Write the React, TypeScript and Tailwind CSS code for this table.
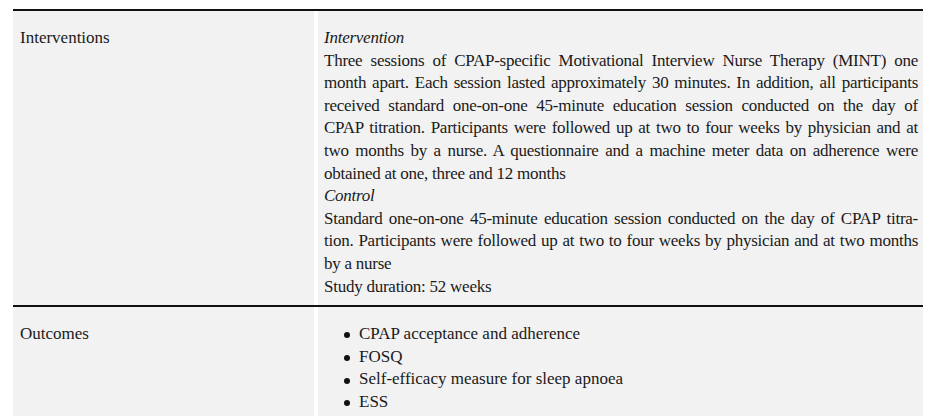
export default function App() {
  const intervention = [
    "Three sessions of CPAP-specific Motivational Interview Nurse Therapy (MINT) one",
    "month apart. Each session lasted approximately 30 minutes. In addition, all participants",
    "received standard one-on-one 45-minute education session conducted on the day of",
    "CPAP titration. Participants were followed up at two to four weeks by physician and at",
    "two months by a nurse. A questionnaire and a machine meter data on adherence were",
  ];
  const control = [
    "Standard one-on-one 45-minute education session conducted on the day of CPAP titra-",
    "tion. Participants were followed up at two to four weeks by physician and at two months",
  ];
  const outcomes = [
    "CPAP acceptance and adherence",
    "FOSQ",
    "Self-efficacy measure for sleep apnoea",
    "ESS",
  ];

  return (
    <div className="min-h-screen bg-white pl-[13px] pr-[22px] pt-[9px] font-['Liberation_Serif','Times_New_Roman',serif] text-[#1a1a1a] text-[17px] leading-[22.6px]">
      <div className="flex gap-1 border-t-2 border-[#111]">
        <div className="w-[301px] shrink-0 bg-[#f2f2f2] pl-[7px] pt-[16px]">Interventions</div>
        <div className="min-w-0 flex-1 bg-[#f2f2f2] pl-[6px] pr-[5px] pt-[16px] pb-[7px] tracking-[-0.25px]">
          <div className="italic">Intervention</div>
          {intervention.map((l) => (
            <div key={l} className="whitespace-nowrap text-justify [text-align-last:justify]">
              {l}
            </div>
          ))}
          <div>obtained at one, three and 12 months</div>
          <div className="italic">Control</div>
          {control.map((l) => (
            <div key={l} className="whitespace-nowrap text-justify [text-align-last:justify]">
              {l}
            </div>
          ))}
          <div>by a nurse</div>
          <div>Study duration: 52 weeks</div>
        </div>
      </div>
      <div className="flex gap-1 border-t-2 border-[#111]">
        <div className="w-[301px] shrink-0 bg-[#f2f2f2] pl-[7px] pt-[16px]">Outcomes</div>
        <div className="flex-1 bg-[#f2f2f2] pl-[26px] pt-[16px] pb-[20px]">
          {outcomes.map((o) => (
            <div key={o} className="flex items-center">
              <span className="mr-[9px] mt-[2px] h-[6px] w-[6px] rounded-full bg-[#111]" />
              {o}
            </div>
          ))}
        </div>
      </div>
    </div>
  );
}
